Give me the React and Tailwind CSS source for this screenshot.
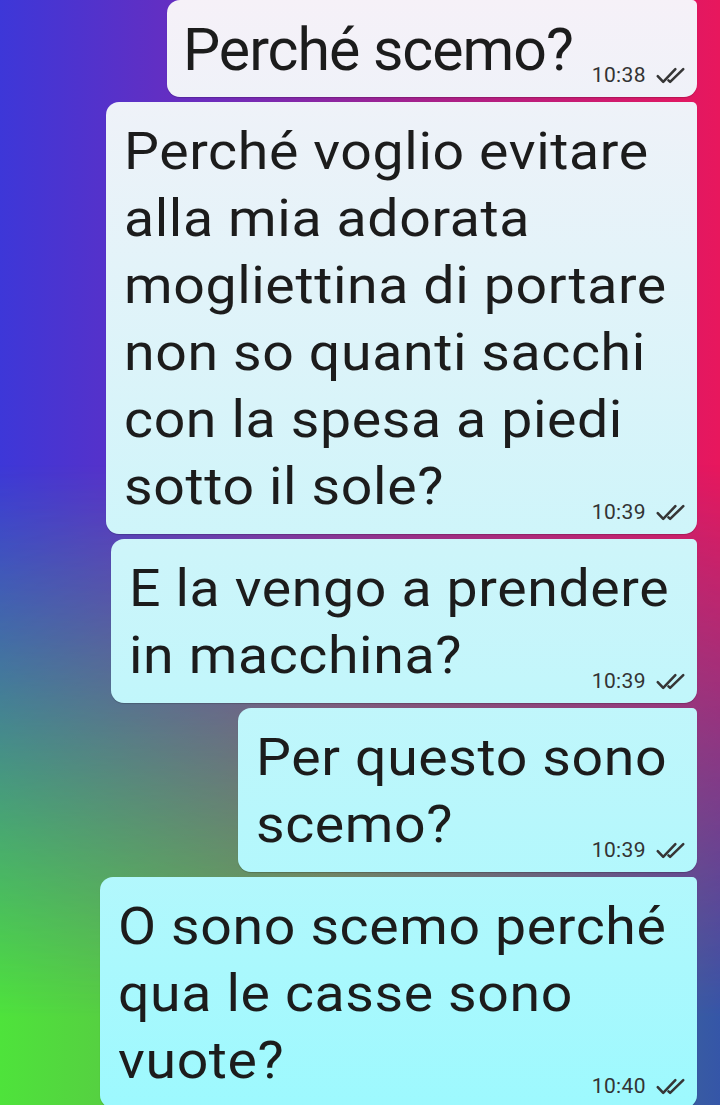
import React from 'react';

// chat bubbles: width, font size, lines, time
const messages = [
  { w: 'w-[530px]', big: true, lines: ['Perché scemo?'], time: '10:38' },
  {
    w: 'w-[591px]',
    lines: [
      'Perché voglio evitare',
      'alla mia adorata',
      'mogliettina di portare',
      'non so quanti sacchi',
      'con la spesa a piedi',
      'sotto il sole?',
    ],
    time: '10:39',
  },
  { w: 'w-[586px]', lines: ['E la vengo a prendere', 'in macchina?'], time: '10:39' },
  { w: 'w-[459px]', lines: ['Per questo sono', 'scemo?'], time: '10:39' },
  { w: 'w-[597px]', lines: ['O sono scemo perché', 'qua le casse sono', 'vuote?'], time: '10:40' },
];

function Ticks() {
  return (
    <svg className="w-[31px] h-[17px]" viewBox="0 0 24 14" fill="none" stroke="#363636" strokeWidth="2.1" strokeLinecap="round" strokeLinejoin="round">
      <path d="M1.5 7.5l4.5 4.8L16 1.8" />
      <path d="M10.3 11l1.4 1.3L22.5 1.8" />
    </svg>
  );
}

function Bubble({ msg }) {
  return (
    <div
      className={`${msg.w} flex flex-col rounded-[13px] rounded-tr-[5px] ${msg.big ? 'pl-[16px]' : 'pl-[18px]'} pr-[11px] pt-[16px] pb-[9px] shadow-[0_1px_1px_rgba(0,0,0,0.18)] bg-fixed bg-linear-to-b from-[#f6f1f8] via-[#cdf5fa] to-[#9df9fe]`}
    >
      <div
        className={
          msg.big
            ? 'text-[59px] leading-[67px] text-[#1c1c1c] tracking-[-1px]'
            : 'text-[52px] leading-[67px] text-[#1c1c1c] tracking-[0.6px] scale-x-[1.065] origin-left'
        }
      >
        {msg.lines.map((l, i) => (
          <div key={i}>{l}</div>
        ))}
      </div>
      <div className="self-end -mt-[20px] flex items-center gap-[9px] text-[21px] leading-[25px] text-[#333] tracking-[0.4px]">
        <span>{msg.time}</span>
        <Ticks />
      </div>
    </div>
  );
}

export default function App() {
  return (
    <div className="relative h-[1105px] overflow-hidden bg-[linear-gradient(to_right,#3d37d8,#6e2cbc_30%,#a8208a_60%,#e8175d)] font-['Roboto','Liberation_Sans',sans-serif]">
      {/* bottom colours of the backdrop fade in */}
      <div className="pointer-events-none absolute inset-0 bg-[linear-gradient(to_right,#4ee33b,#66a84e_45%,#3556a8)] [mask-image:linear-gradient(to_bottom,transparent_42%,black_92%)]" />
      <div className="relative flex flex-col items-end gap-[5px] pr-[23px]">
        {messages.map((m, i) => (
          <Bubble key={i} msg={m} />
        ))}
      </div>
    </div>
  );
}
